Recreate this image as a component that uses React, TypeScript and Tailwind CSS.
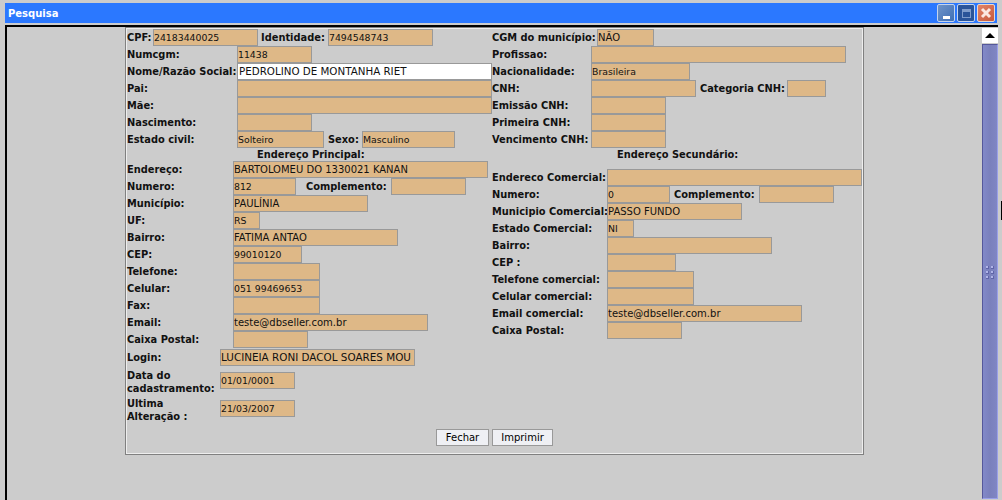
import React from 'react';

const FONT = "[font-family:'DejaVu_Sans',Verdana,sans-serif]";

// size: the reference's hinted glyphs run wider for capitals than for digits
function Field({ w, value, white, size = 'text-[9.33px]' }: { w: string; value?: string; white?: boolean; size?: string }) {
  return (
    <div
      className={`${w} ${size} h-[17px] shrink-0 border border-[#999999] leading-[15px] text-[#111111] whitespace-nowrap overflow-hidden ${white ? 'bg-white' : 'bg-[#deb887]'}`}
    >
      {value}
    </div>
  );
}

function Label({ w, ml, children }: { w: string; ml?: string; children: React.ReactNode }) {
  return <div className={`${w} ${ml ?? ''} shrink-0 text-[9.85px] leading-[13px] font-bold text-[#111111] whitespace-nowrap`}>{children}</div>;
}

function Row({ children }: { children: React.ReactNode }) {
  return <div className="flex items-center h-[17px]">{children}</div>;
}

function LeftColumn() {
  return (
    <div className="w-[365px] shrink-0">
      <Row>
        <Label w="w-[26px]">CPF:</Label>
        <Field w="w-[105px]" value="24183440025" />
        <Label w="w-[67px]" ml="ml-[3px]">Identidade:</Label>
        <Field w="w-[105px]" value="7494548743" />
      </Row>
      <Row><Label w="w-[110px]">Numcgm:</Label><Field w="w-[75px]" value="11438" /></Row>
      <Row><Label w="w-[110px]">Nome/Razão Social:</Label><Field w="w-[255px]" size="text-[10.3px] pl-px" value="PEDROLINO DE MONTANHA RIET" white /></Row>
      <Row><Label w="w-[110px]">Pai:</Label><Field w="w-[255px]" /></Row>
      <Row><Label w="w-[110px]">Mãe:</Label><Field w="w-[255px]" /></Row>
      <Row><Label w="w-[110px]">Nascimento:</Label><Field w="w-[75px]" /></Row>
      <Row>
        <Label w="w-[110px]">Estado civil:</Label>
        <Field w="w-[87px]" value="Solteiro" />
        <Label w="w-[34px]" ml="ml-[4px]">Sexo:</Label>
        <Field w="w-[93px]" value="Masculino" />
      </Row>
      <div className="h-[13px] pl-[130px] text-[9.85px] leading-[13px] font-bold text-[#111111]">Endereço Principal:</div>
      <Row><Label w="w-[106px]">Endereço:</Label><Field w="w-[255px]" size="text-[10px]" value="BARTOLOMEU DO 1330021 KANAN" /></Row>
      <Row>
        <Label w="w-[106px]">Numero:</Label>
        <Field w="w-[63px]" value="812" />
        <Label w="w-[85px]" ml="ml-[10px]">Complemento:</Label>
        <Field w="w-[75px]" />
      </Row>
      <Row><Label w="w-[106px]">Município:</Label><Field w="w-[135px]" size="text-[10px]" value="PAULÍNIA" /></Row>
      <Row><Label w="w-[106px]">UF:</Label><Field w="w-[27px]" value="RS" /></Row>
      <Row><Label w="w-[106px]">Bairro:</Label><Field w="w-[165px]" size="text-[10px]" value="FATIMA ANTAO" /></Row>
      <Row><Label w="w-[106px]">CEP:</Label><Field w="w-[69px]" value="99010120" /></Row>
      <Row><Label w="w-[106px]">Telefone:</Label><Field w="w-[87px]" /></Row>
      <Row><Label w="w-[106px]">Celular:</Label><Field w="w-[87px]" value="051 99469653" /></Row>
      <Row><Label w="w-[106px]">Fax:</Label><Field w="w-[87px]" /></Row>
      <Row><Label w="w-[106px]">Email:</Label><Field w="w-[195px]" size="text-[10px]" value="teste@dbseller.com.br" /></Row>
      <Row><Label w="w-[106px]">Caixa Postal:</Label><Field w="w-[75px]" /></Row>
      <div className="mt-px">
        <Row><Label w="w-[93px]">Login:</Label><Field w="w-[195px]" size="text-[10.4px]" value="LUCINEIA RONI DACOL SOARES MOU" /></Row>
      </div>
      <div className="flex items-start mt-[3px]">
        <Label w="w-[93px]">Data do<br />cadastramento:</Label>
        <div className="mt-[3px]"><Field w="w-[75px]" value="01/01/0001" /></div>
      </div>
      <div className="flex items-start mt-[2px]">
        <Label w="w-[93px]">Ultima<br />Alteração :</Label>
        <div className="mt-[3px]"><Field w="w-[75px]" value="21/03/2007" /></div>
      </div>
    </div>
  );
}

function RightColumn() {
  return (
    <div className="flex-1">
      <Row><Label w="w-[105px]">CGM do município:</Label><Field w="w-[57px]" size="text-[10px]" value="NÃO" /></Row>
      <Row><Label w="w-[99px]">Profissao:</Label><Field w="w-[255px]" /></Row>
      <Row><Label w="w-[99px]">Nacionalidade:</Label><Field w="w-[99px]" value="Brasileira" /></Row>
      <Row>
        <Label w="w-[99px]">CNH:</Label>
        <Field w="w-[105px]" />
        <Label w="w-[87px]" ml="ml-[4px]">Categoria CNH:</Label>
        <Field w="w-[39px]" />
      </Row>
      <Row><Label w="w-[99px]">Emissão CNH:</Label><Field w="w-[75px]" /></Row>
      <Row><Label w="w-[99px]">Primeira CNH:</Label><Field w="w-[75px]" /></Row>
      <Row><Label w="w-[99px]">Vencimento CNH:</Label><Field w="w-[75px]" /></Row>
      <div className="h-[21px] pl-[125px] text-[9.85px] leading-[13px] font-bold text-[#111111]">Endereço Secundário:</div>
      <Row><Label w="w-[115px]">Endereco Comercial:</Label><Field w="w-[255px]" /></Row>
      <Row>
        <Label w="w-[115px]">Numero:</Label>
        <Field w="w-[63px]" value="0" />
        <Label w="w-[85px]" ml="ml-[4px]">Complemento:</Label>
        <Field w="w-[75px]" />
      </Row>
      <Row><Label w="w-[115px]">Municipio Comercial:</Label><Field w="w-[135px]" size="text-[10px]" value="PASSO FUNDO" /></Row>
      <Row><Label w="w-[115px]">Estado Comercial:</Label><Field w="w-[27px]" value="NI" /></Row>
      <Row><Label w="w-[115px]">Bairro:</Label><Field w="w-[165px]" /></Row>
      <Row><Label w="w-[115px]">CEP :</Label><Field w="w-[69px]" /></Row>
      <Row><Label w="w-[115px]">Telefone comercial:</Label><Field w="w-[87px]" /></Row>
      <Row><Label w="w-[115px]">Celular comercial:</Label><Field w="w-[87px]" /></Row>
      <Row><Label w="w-[115px]">Email comercial:</Label><Field w="w-[195px]" size="text-[10px]" value="teste@dbseller.com.br" /></Row>
      <Row><Label w="w-[115px]">Caixa Postal:</Label><Field w="w-[75px]" /></Row>
    </div>
  );
}

function WindowButtons() {
  return (
    <div className="flex items-center gap-[2px] pr-[2px]">
      <div className="w-[18px] h-[18px] border border-[#c4d4ee] rounded-[2px] bg-gradient-to-br from-[#6f94c8] to-[#3f6fb5] flex items-end justify-center pb-[2px]">
        <div className="w-[7px] h-[3px] bg-white" />
      </div>
      <div className="w-[18px] h-[18px] border border-[#c4d4ee] rounded-[2px] bg-[#2a5499] flex items-center justify-center">
        <div className="w-[9px] h-[9px] border border-[#7f9ccb] border-t-[3px]" />
      </div>
      <div className="w-[18px] h-[18px] border border-[#e8d8d0] rounded-[2px] bg-gradient-to-br from-[#e08468] to-[#c85a3c] flex items-center justify-center">
        <svg width="12" height="12" viewBox="0 0 12 12">
          <path d="M2 2 L10 10 M10 2 L2 10" stroke="#fbe8e0" strokeWidth="3" />
        </svg>
      </div>
    </div>
  );
}

function Scrollbar() {
  return (
    <div className="w-[16px] shrink-0 flex flex-col pt-px">
      <div className="h-[15px] bg-white flex items-center justify-center">
        <div className="w-0 h-0 border-x-[5px] border-x-transparent border-b-[5px] border-b-black" />
      </div>
      <div className="flex-1 mt-px mb-px border border-[#55589a] border-r-[#9aa0e8] border-b-[#9aa0e8] bg-gradient-to-r from-[#8289c8] via-[#7a80bc] to-[#8086c4] flex items-center justify-center">
        <div className="grid grid-cols-2 gap-x-[2px] gap-y-[2px] mt-[2px]">
          {Array.from({ length: 6 }).map((_, i) => (
            <div key={i} className="w-[3px] h-[3px] bg-[#b0b4e8] border-r border-b border-[#5f64a8]" />
          ))}
        </div>
      </div>
    </div>
  );
}

export default function App() {
  return (
    <div className={`${FONT} relative w-[1002px] h-[500px] overflow-hidden bg-[#cccccc] pt-[3px] pl-[5px] pr-[4px] flex flex-col`}>
      {/* Title bar */}
      <div className="h-[20px] shrink-0 mr-px bg-[#2b78ff] flex items-center justify-between pl-[3px]">
        <span className="text-[10px] font-bold text-white">Pesquisa</span>
        <WindowButtons />
      </div>

      {/* Window body */}
      <div className="flex flex-1 min-h-0 mt-[2px] border-t-2 border-l-2 border-black">
        <div className="flex-1 pl-[118px]">
          <div className="w-[739px] border border-[#808080]">
            <div className="border border-[#eeeeee] pb-[7px]">
              <div className="flex">
                <LeftColumn />
                <RightColumn />
              </div>
              <div className="flex justify-center gap-[3px] mt-[6px]">
                <button className="w-[53px] h-[17px] border border-[#999999] bg-[#eff0f4] text-[10px] leading-[15px] text-black">Fechar</button>
                <button className="w-[61px] h-[17px] border border-[#999999] bg-[#eff0f4] text-[10px] leading-[15px] text-black">Imprimir</button>
              </div>
            </div>
          </div>
        </div>
        <Scrollbar />
      </div>

      {/* Edge marker of the page behind */}
      <div className="absolute right-0 top-[201px] w-px h-[19px] bg-black" />
    </div>
  );
}
